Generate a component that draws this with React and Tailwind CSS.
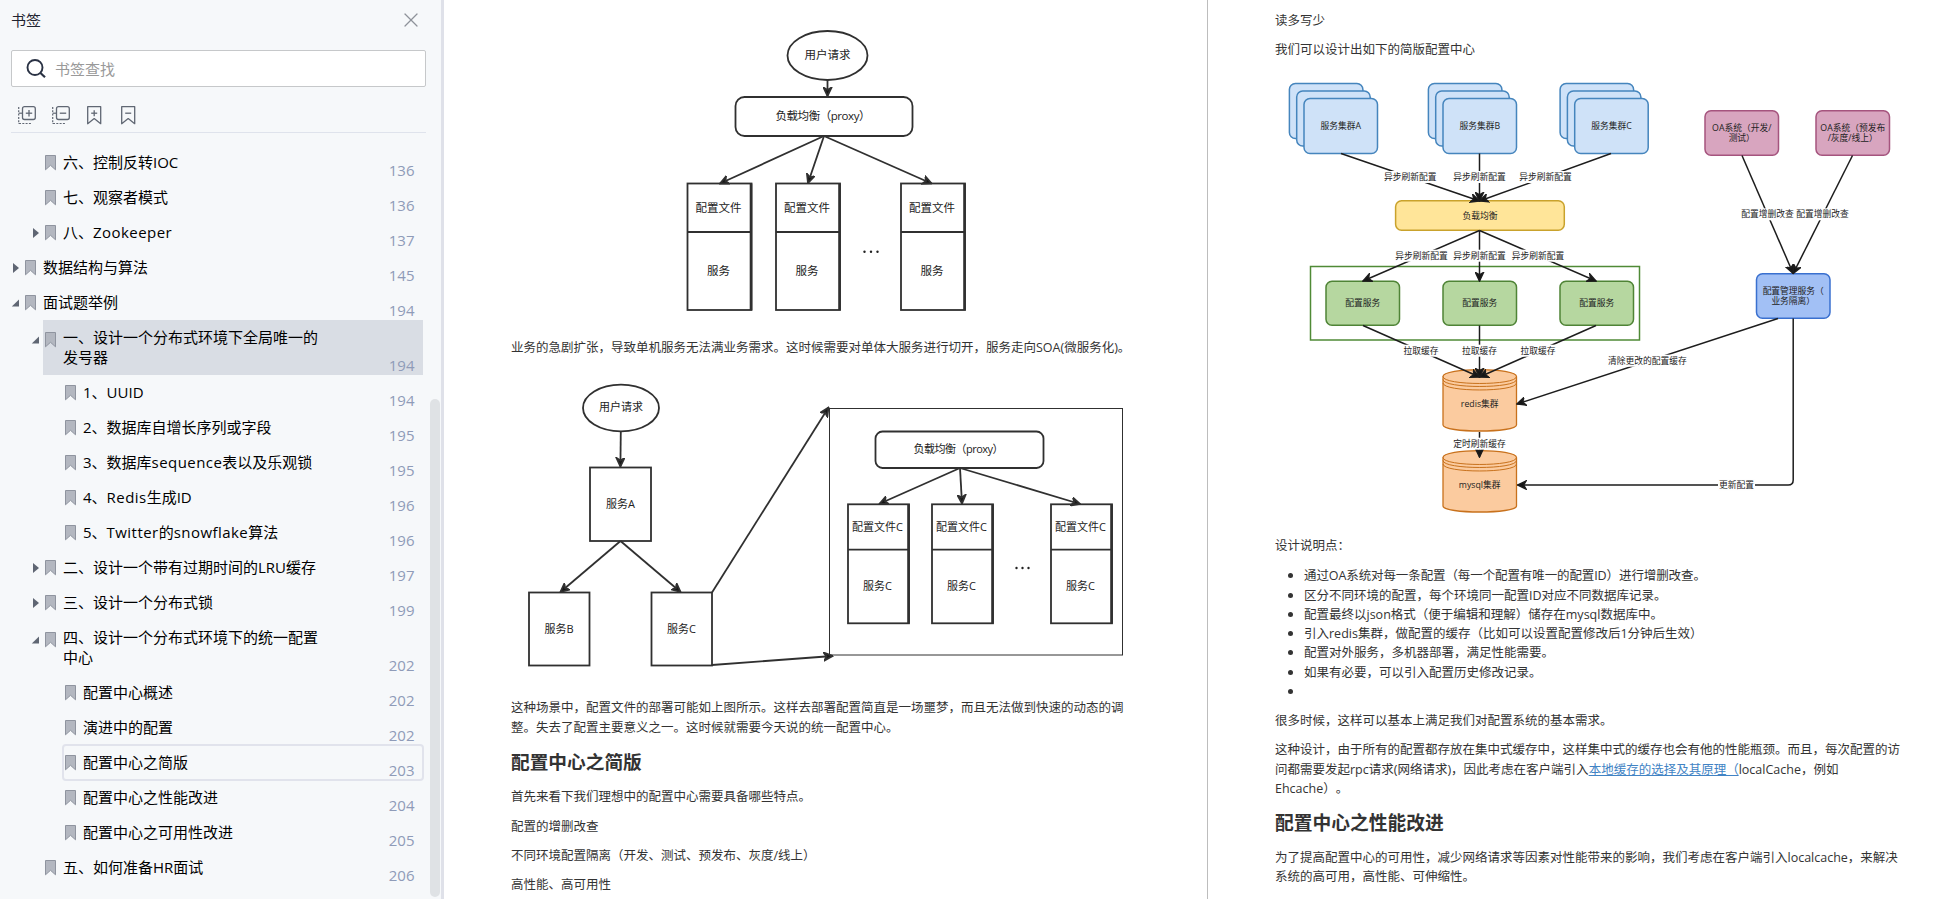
import { X } from 'lucide-react';

const FONT = "font-['Open_Sans','Noto_Sans_CJK_SC',sans-serif]";

const TREE = [
  { level: 2, text: '六、控制反转IOC', page: 136 },
  { level: 2, text: '七、观察者模式', page: 136 },
  { level: 2, text: '八、Zookeeper', page: 137, arrow: 'closed' },
  { level: 1, text: '数据结构与算法', page: 145, arrow: 'closed' },
  { level: 1, text: '面试题举例', page: 194, arrow: 'open' },
  { level: 2, text: '一、设计一个分布式环境下全局唯一的发号器', page: 194, arrow: 'open', tall: true, active: true },
  { level: 3, text: '1、UUID', page: 194 },
  { level: 3, text: '2、数据库自增长序列或字段', page: 195 },
  { level: 3, text: '3、数据库sequence表以及乐观锁', page: 195 },
  { level: 3, text: '4、Redis生成ID', page: 196 },
  { level: 3, text: '5、Twitter的snowflake算法', page: 196 },
  { level: 2, text: '二、设计一个带有过期时间的LRU缓存', page: 197, arrow: 'closed' },
  { level: 2, text: '三、设计一个分布式锁', page: 199, arrow: 'closed' },
  { level: 2, text: '四、设计一个分布式环境下的统一配置中心', page: 202, arrow: 'open', tall: true },
  { level: 3, text: '配置中心概述', page: 202 },
  { level: 3, text: '演进中的配置', page: 202 },
  { level: 3, text: '配置中心之简版', page: 203, focused: true },
  { level: 3, text: '配置中心之性能改进', page: 204 },
  { level: 3, text: '配置中心之可用性改进', page: 205 },
  { level: 2, text: '五、如何准备HR面试', page: 206 },
];

const INDENT = { 1: 'pl-[11px]', 2: 'pl-[31px]', 3: 'pl-[51px]' };

const FlagIcon = ({ tall }) => (
  <svg width="11" height="16" viewBox="0 0 11 16" className={`shrink-0 ${tall ? 'mt-3' : 'mt-2.5'}`}>
    <path d="M.5.5h10v14.300L5.500 10.300.500 14.800z" fill="#b3b7c0" stroke="#8f949f" />
  </svg>
);

const Arrow = ({ state, tall }) => (
  <svg width="8" height="10" viewBox="0 0 8 10" className={`shrink-0 ${tall ? 'mt-[15px]' : 'mt-[13px]'}`}>
    {state === 'closed' && <path d="M2 0l6 5-6 5z" fill="#5f6673" />}
    {state === 'open' && <path d="M8 1.500v7H.8z" fill="#5f6673" />}
  </svg>
);

// Latin words sit a touch looser than the Chinese text around them
const Title = ({ text }) =>
  text.split(/([A-Z]?[a-z]{3,})/).map((part, i) =>
    i % 2 ? <span key={i} className="tracking-[0.45px]">{part}</span> : part
  );

function TreeRow({ item }) {
  const { level, text, page, arrow, tall, active, focused } = item;
  return (
    <div className={`relative flex items-start ${tall ? 'h-[55px]' : 'h-[35px]'} ${INDENT[level]}`}>
      {active && <div className="absolute left-[43px] right-[18px] inset-y-0 bg-[#d9dde4]"></div>}
      {focused && <div className="absolute left-[62px] right-[17px] -top-px -bottom-px border-2 border-[#e1e3ec] rounded-sm"></div>}
      <div className="relative flex w-full items-start">
        <Arrow state={arrow} tall={tall} />
        <span className="w-[6px] shrink-0"></span>
        <FlagIcon tall={tall} />
        <span className="ml-[7px] mt-[7px] w-[260px] shrink-0 text-[15px] leading-5 text-black"><Title text={text} /></span>
      </div>
      <span className="absolute right-[26.5px] bottom-0 text-[15px] leading-[19px] text-[#8f9bb8]">{page}</span>
    </div>
  );
}

function Toolbar() {
  return (
    <div className="ml-[11px] mr-[15px] flex h-[46px] items-start gap-4 border-b border-[#dfe3ec] pl-[7px] pt-[19px]">
      {[true, false].map((plus) => (
        <svg key={String(plus)} width="18" height="19" viewBox="0 0 18 19" fill="none" stroke="#606773">
          <rect x="4.500" y=".7" width="12.800" height="12.800" rx="2" strokeWidth="1.300" />
          <path d="M7.800 7.200h6.400" strokeWidth="1.300" />
          {plus && <path d="M11 4v6.400" strokeWidth="1.300" />}
          <path d="M.7 1v17" strokeDasharray="2 1.300" strokeWidth="1.200" />
          <path d="M1 17.500h13" strokeDasharray="2 1.300" strokeWidth="1.200" />
          <path d="M1 7.200h3" strokeWidth="1.200" />
        </svg>
      ))}
      {[true, false].map((plus) => (
        <svg key={String(plus)} width="18" height="19" viewBox="0 0 18 19" fill="none" stroke="#606773" strokeWidth="1.300">
          <path d="M1.700 .7h13v17L8.200 12.600 1.700 17.700z" strokeLinejoin="round" />
          <path d="M5.200 7.200h6" />
          {plus && <path d="M8.200 4.200v6" />}
        </svg>
      ))}
    </div>
  );
}

function Sidebar() {
  return (
    <aside className="relative h-full w-[444px] shrink-0 border-r-[3px] border-[#dfe1e9] bg-[#f6f8fa]">
      <div className="flex h-[50px] items-start justify-between pl-[11px] pr-[18px] pt-[9px]">
        <span className="text-[15px] leading-[22px] text-[#1f2430]">书签</span>
        <X size={24} strokeWidth={1.2} className="-mt-px text-[#8e929a]" />
      </div>
      <div className="ml-[11px] mr-[15px] flex h-[37px] items-center rounded-[2px] border border-[#c6c8ca] bg-white pl-[14px]">
        <svg width="20" height="20" viewBox="0 0 20 20" fill="none" stroke="#2a3244" strokeWidth="1.900">
          <circle cx="9" cy="8.500" r="7.500" />
          <path d="M14.200 13.700l4.800 4.600" strokeWidth="2.200" />
        </svg>
        <span className="ml-[9px] text-[15px] leading-5 text-[#999]">书签查找</span>
      </div>
      <Toolbar />
      <div className="pt-3">
        {TREE.map((item) => <TreeRow key={item.text} item={item} />)}
      </div>
      <div className="absolute left-[430px] top-[399px] h-[498px] w-[10px] rounded-full bg-[#dfe2e5]"></div>
    </aside>
  );
}

// Shared drawing helpers, all in page coordinates
const Defs = ({ id }) => (
  <defs>
    <marker id={id} viewBox="-9 -5 10 10" markerWidth="10" markerHeight="10" markerUnits="userSpaceOnUse" orient="auto">
      <path d="M-8.500-4L0 0l-8.500 4 2.500-4z" fill="#161616" />
    </marker>
  </defs>
);

const Label = ({ x, y, size, fill = '#222', children }) => (
  <text x={x} y={y + size * 0.36} fontSize={size} fill={fill} textAnchor="middle" stroke="none">{children}</text>
);

const Server = ({ x, y, w, h, split, top, bottom, size }) => (
  <g>
    <rect x={x} y={y} width={w} height={h} />
    <path d={`M${x} ${split}h${w}`} />
    <path d={`M${x + w - 0.5} ${y}v${h}`} strokeWidth="2.600" />
    <Label x={x + w / 2 - 1} y={(y + split) / 2 + 0.5} size={size}>{top}</Label>
    <Label x={x + w / 2 - 1} y={(split + y + h) / 2 - 0.5} size={size}>{bottom}</Label>
  </g>
);

const Dots = ({ x, y, gap }) => (
  <g fill="#222" stroke="none">
    {[0, 1, 2].map((i) => <circle key={i} cx={x + i * gap} cy={y} r="1.200" />)}
  </g>
);

const ProxyDiagram = () => (
  <svg width="763" height="338" viewBox="444 0 763 338" fill="none" stroke="#303030" strokeWidth="1.800" className="block shrink-0">
    <Defs id="tip1" />
    <ellipse cx="827.500" cy="55.500" rx="40" ry="24.500" />
    <Label x={827.5} y={55} size={11.5}>用户请求</Label>
    <rect x="735.500" y="97" width="177" height="39" rx="9" />
    <text x="775.500" y="120" fontSize="11.500" fill="#222" stroke="none" textLength="95">负载均衡（proxy）</text>
    <path d="M827.500 80v16" markerEnd="url(#tip1)" />
    <path d="M824 136L720 183.500" markerEnd="url(#tip1)" />
    <path d="M824 136L808 183" markerEnd="url(#tip1)" />
    <path d="M824 136L931.500 183.500" markerEnd="url(#tip1)" />
    {[687.5, 776, 901].map((x) => (
      <Server key={x} x={x} y={183.5} w={64} h={126.500} split={232} top="配置文件" bottom="服务" size={11.5} />
    ))}
    <Dots x={864.5} y={251.7} gap={6.5} />
  </svg>
);

const SoaDiagram = () => (
  <svg width="763" height="341" viewBox="444 357 763 341" fill="none" stroke="#303030" strokeWidth="1.800" className="block shrink-0">
    <Defs id="tip2" />
    <ellipse cx="621" cy="408" rx="38" ry="23.300" />
    <Label x={621} y={407.5} size={11}>用户请求</Label>
    <rect x="590" y="467.500" width="61" height="73.500" />
    <Label x={620.5} y={504} size={11}>服务A</Label>
    <rect x="529" y="592.500" width="60.500" height="73" />
    <Label x={559} y={629} size={11}>服务B</Label>
    <rect x="651.500" y="592.500" width="60.500" height="73" />
    <Label x={681.5} y={629} size={11}>服务C</Label>
    <rect x="829.500" y="408.500" width="293" height="246.500" strokeWidth="1" />
    <rect x="875.500" y="431.500" width="168" height="36.500" rx="7" />
    <text x="913.500" y="453" fontSize="11" fill="#222" stroke="none" textLength="90">负载均衡（proxy）</text>
    <path d="M620.800 431L620.400 466.500" markerEnd="url(#tip2)" />
    <path d="M620.500 541L560.500 592" markerEnd="url(#tip2)" />
    <path d="M620.500 541L680.500 592" markerEnd="url(#tip2)" />
    <path d="M712 592.500L828.500 407.500" markerEnd="url(#tip2)" />
    <path d="M712 665L832.500 656" markerEnd="url(#tip2)" />
    <path d="M960 468L879.500 503.800" markerEnd="url(#tip2)" />
    <path d="M960 468L962 503.500" markerEnd="url(#tip2)" />
    <path d="M960 468L1080 504" markerEnd="url(#tip2)" />
    {[848, 932, 1051].map((x) => (
      <Server key={x} x={x} y={504.300} w={61} h={119} split={549.700} top="配置文件C" bottom="服务C" size={11} />
    ))}
    <Dots x={1016.5} y={568} gap={6} />
  </svg>
);

const LineLabel = ({ x, y, w, children }) => (
  <g>
    <rect x={x - w / 2} y={y - 6} width={w} height="12" fill="#fefefe" stroke="none" />
    <Label x={x} y={y} size={8.75}>{children}</Label>
  </g>
);

const Box = ({ x, y, w, h, fill, stroke, lines }) => (
  <g>
    <rect x={x} y={y} width={w} height={h} rx="6" fill={fill} stroke={stroke} />
    {lines.map((line, i) => (
      <Label key={line} x={x + w / 2} y={y + h / 2 + (i - (lines.length - 1) / 2) * 10.500} size={8.75}>{line}</Label>
    ))}
  </g>
);

const Cylinder = ({ y, name }) => (
  <g stroke="#c8711c" strokeWidth="1.300">
    <path d={`M1443 ${y + 7}c0-9.300 73.500-9.300 73.500 0v48.500c0 8-73.500 8-73.500 0z`} fill="#fbcb9f" />
    {[7, 10, 13.5].map((dy) => <path key={dy} d={`M1443 ${y + dy}c0 9.300 73.500 9.300 73.500 0`} strokeWidth="1" />)}
    <Label x={1479.7} y={y + 34.5} size={8.75}>{name}</Label>
  </g>
);

const ConfigDiagram = () => (
  <svg width="727" height="476" viewBox="1208 60 727 476" fill="none" stroke="#1d1d1d" strokeWidth="1.500" className="block shrink-0">
    <Defs id="tip3" />
    {[['A', 1304], ['B', 1443], ['C', 1574.7]].map(([name, x]) => (
      <g key={name}>
        <Box x={x - 14.6} y={83.500} w={73.500} h={55} fill="#cfe2f8" stroke="#4585bd" lines={[]} />
        <Box x={x - 7.3} y={91} w={73.500} h={55} fill="#cfe2f8" stroke="#4585bd" lines={[]} />
        <Box x={x} y={98.500} w={73.500} h={55} fill="#cfe2f8" stroke="#4585bd" lines={['服务集群' + name]} />
      </g>
    ))}
    <Box x={1705} y={110.800} w={73.500} h={44.500} fill="#d8a5bf" stroke="#a5547e" lines={['OA系统（开发/', '测试）']} />
    <Box x={1816} y={110.800} w={73.500} h={44.500} fill="#d8a5bf" stroke="#a5547e" lines={['OA系统（预发布', '/灰度/线上）']} />
    <Box x={1395.6} y={200.700} w={168.700} h={29.600} fill="#ffe599" stroke="#c9a22c" lines={['负载均衡']} />
    <rect x="1310.500" y="266.500" width="329" height="73.500" stroke="#4f8a36" strokeWidth="1.500" />
    {[1326, 1443, 1560].map((x) => (
      <Box key={x} x={x} y={281.300} w={73.500} h={44} fill="#b6d7a0" stroke="#4f8436" lines={['配置服务']} />
    ))}
    <Box x={1756.5} y={273.700} w={73.500} h={44.600} fill="#a2c0f5" stroke="#3a70cf" lines={['配置管理服务（', '业务隔离）']} />
    <Cylinder y={369.5} name="redis集群" />
    <Cylinder y={450.500} name="mysql集群" />

    {[1341, 1479.5, 1611].map((x) => <path key={x} d={`M${x} 153.500L1479.500 201`} markerEnd="url(#tip3)" />)}
    {[1363, 1479.5, 1596].map((x) => <path key={x} d={`M1479.500 230.500L${x} 281`} markerEnd="url(#tip3)" />)}
    {[1363, 1479.5, 1596].map((x) => <path key={x} d={`M${x} 325.500L1479.500 377`} markerEnd="url(#tip3)" />)}
    <path d="M1479.500 432v25" markerEnd="url(#tip3)" />
    <path d="M1742 155.500L1793.200 273.500" markerEnd="url(#tip3)" />
    <path d="M1852.500 155.500L1793.200 273.500" markerEnd="url(#tip3)" />
    <path d="M1778 318.500L1517 404" markerEnd="url(#tip3)" />
    <path d="M1793.200 318.500V480q0 5-5 5H1517.500" markerEnd="url(#tip3)" />

    {[1410.2, 1479.5, 1545.4].map((x) => <LineLabel key={x} x={x} y={177} w={53}>异步刷新配置</LineLabel>)}
    {[1421.4, 1479.5, 1538].map((x) => <LineLabel key={x} x={x} y={255.700} w={53}>异步刷新配置</LineLabel>)}
    {[1421, 1479.5, 1538].map((x) => <LineLabel key={x} x={x} y={350.700} w={36}>拉取缓存</LineLabel>)}
    <LineLabel x={1479.5} y={443.700} w={53}>定时刷新缓存</LineLabel>
    <LineLabel x={1767.5} y={214.300} w={53}>配置增删改查</LineLabel>
    <LineLabel x={1822.6} y={214.300} w={53}>配置增删改查</LineLabel>
    <LineLabel x={1647.4} y={360.700} w={80}>清除更改的配置缓存</LineLabel>
    <LineLabel x={1736.5} y={485} w={37}>更新配置</LineLabel>
  </svg>
);

const POINTS = [
  '通过OA系统对每一条配置（每一个配置有唯一的配置ID）进行增删改查。',
  '区分不同环境的配置，每个环境同一配置ID对应不同数据库记录。',
  '配置最终以json格式（便于编辑和理解）储存在mysql数据库中。',
  '引入redis集群，做配置的缓存（比如可以设置配置修改后1分钟后生效）',
  '配置对外服务，多机器部署，满足性能需要。',
  '如果有必要，可以引入配置历史修改记录。',
  '',
];

export default function App() {
  return (
    <div className={`flex h-[899px] w-[1935px] overflow-hidden bg-white text-[12.5px] leading-[19.25px] text-[#333] [text-spacing-trim:space-all] ${FONT}`}>
      <Sidebar />

      <main className="flex w-[764px] shrink-0 flex-col border-r border-[#bdbdbd]">
        <ProxyDiagram />
        <p className="pl-[67px] whitespace-nowrap">业务的急剧扩张，导致单机服务无法满业务需求。这时候需要对单体大服务进行切开，服务走向SOA(微服务化)。</p>
        <SoaDiagram />
        <div className="pl-[67px] whitespace-nowrap">
          <p>
            这种场景中，配置文件的部署可能如上图所示。这样去部署配置简直是一场噩梦，而且无法做到快速的动态的调<br />
            整。失去了配置主要意义之一。这时候就需要今天说的统一配置中心。
          </p>
          <h2 className="mt-[11px] text-[18.7px] leading-[28px] font-bold">配置中心之简版</h2>
          <p className="mt-[11.5px]">首先来看下我们理想中的配置中心需要具备哪些特点。</p>
          <p className="mt-2.5">配置的增删改查</p>
          <p className="mt-2.5">不同环境配置隔离（开发、测试、预发布、灰度/线上）</p>
          <p className="mt-2.5">高性能、高可用性</p>
        </div>
      </main>

      <section className="flex w-[727px] shrink-0 flex-col pt-[11px]">
        <div className="h-[49px] shrink-0 pl-[67px]">
          <p>读多写少</p>
          <p className="mt-2.5">我们可以设计出如下的简版配置中心</p>
        </div>
        <ConfigDiagram />
        <div className="pl-[67px] whitespace-nowrap">
          <p>设计说明点：</p>
          <ul className="mt-[11px]">
            {POINTS.map((point, i) => (
              <li key={point} className={`flex h-[19.25px] items-center ${i === 0 ? 'tracking-[-0.1px]' : ''}`}>
                <span className="ml-[13px] mr-[11px] h-[5px] w-[5px] rounded-full bg-[#333]"></span>
                {point}
              </li>
            ))}
          </ul>
          <p className="mt-2.5">很多时候，这样可以基本上满足我们对配置系统的基本需求。</p>
          <p className="mt-2.5">
            这种设计，由于所有的配置都存放在集中式缓存中，这样集中式的缓存也会有他的性能瓶颈。而且，每次配置的访<br />
            问都需要发起rpc请求(网络请求)，因此考虑在客户端引入<a className="text-[#4183c4] underline">本地缓存的选择及其原理（</a>localCache，例如<br />
            Ehcache）。
          </p>
          <h2 className="mt-[11px] text-[18.75px] leading-[28px] font-bold">配置中心之性能改进</h2>
          <p className="mt-[11px]">
            为了提高配置中心的可用性，减少网络请求等因素对性能带来的影响，我们考虑在客户端引入localcache，来解决<br />
            系统的高可用，高性能、可伸缩性。
          </p>
        </div>
      </section>
    </div>
  );
}
